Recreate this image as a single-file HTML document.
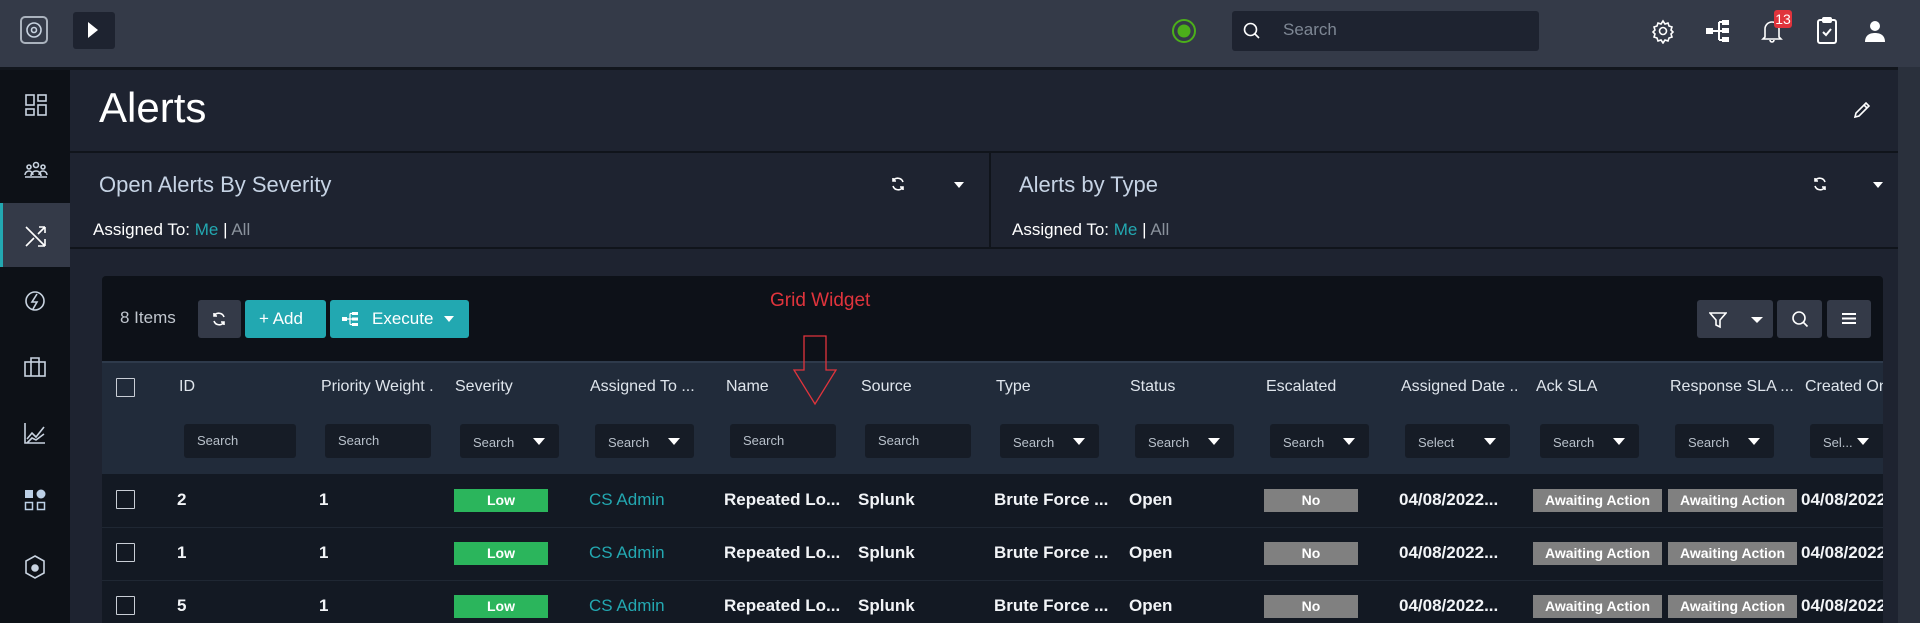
<!DOCTYPE html>
<html><head><meta charset="utf-8"><style>
*{box-sizing:border-box;margin:0;padding:0}
body{width:1920px;height:623px;overflow:hidden;background:#1e2330;font-family:"Liberation Sans",sans-serif;color:#fff;position:relative}
.a{position:absolute}
.ic{position:absolute;stroke:#c8d3e0;fill:none;stroke-width:1.6}
.hdr{font-size:16px;color:#dfe5ec;top:378px}
.inp{position:absolute;top:424px;height:34px;background:#161c26;border-radius:3px;font-size:13px;color:#b8c0ca;padding:0 0 0 13px;line-height:34px}
.inp.dd{line-height:38px}
.inp.dd:after{content:"";position:absolute;right:14px;top:14px;border:6px solid transparent;border-top:7px solid #fff;border-bottom:0}
.cell{position:absolute;font-size:17px;font-weight:bold;color:#f2f4f7}
.cb{position:absolute;left:116px;width:19px;height:19px;border:1.5px solid #c9ced6;border-radius:1px}
.low{position:absolute;left:454px;width:94px;height:23px;background:#2bb55c;font-size:14px;font-weight:bold;text-align:center;line-height:23px}
.no{position:absolute;left:1264px;width:94px;height:23px;background:#808080;font-size:14px;font-weight:bold;text-align:center;line-height:23px}
.aw{position:absolute;width:129px;height:23px;background:#808080;font-size:14px;font-weight:bold;text-align:center;line-height:23px}
.btn{position:absolute;top:300px;height:38px;border-radius:3px}
</style></head><body>
<!-- top bar -->
<div class="a" style="left:0;top:0;width:1920px;height:67px;background:#343a48"></div>
<div class="a" style="left:0;top:67px;width:1920px;height:3px;background:#12161d"></div>
<div class="a" style="left:20px;top:16px;width:28px;height:28px;border:2px solid #aab2bd;border-radius:5px"></div>
<svg class="ic" style="left:22px;top:18px" width="24" height="24" viewBox="0 0 24 24"><circle cx="12" cy="12" r="7"/><circle cx="12" cy="12" r="2.5"/></svg>
<div class="a" style="left:73px;top:12px;width:42px;height:37px;background:#1e2330;border-radius:3px"></div>
<div class="a" style="left:88px;top:22px;border-left:10px solid #fff;border-top:8px solid transparent;border-bottom:8px solid transparent"></div>
<svg class="a" style="left:1171px;top:18px" width="26" height="26" viewBox="0 0 26 26"><circle cx="13" cy="13" r="11" fill="none" stroke="#4caf1a" stroke-width="2"/><circle cx="13" cy="13" r="6.5" fill="#4caf1a"/></svg>
<div class="a" style="left:1232px;top:11px;width:307px;height:40px;background:#1e2330;border-radius:3px"></div>
<svg class="ic" style="left:1242px;top:21px;stroke:#fff" width="20" height="20" viewBox="0 0 20 20"><circle cx="8.5" cy="8.5" r="6"/><path d="M13 13l4 4"/></svg>
<div class="a" style="left:1283px;top:20px;font-size:17px;color:#7e8794">Search</div>
<svg class="ic" style="left:1650px;top:18px;stroke:#fff" width="26" height="26" viewBox="0 0 26 26"><circle cx="13" cy="13" r="3.5"/><path d="M13 3l2 3 3-1 1 3 3 1-1 3 2 2-2 2 1 3-3 1-1 3-3-1-2 3-2-3-3 1-1-3-3-1 1-3-2-2 2-2-1-3 3-1 1-3 3 1z"/></svg>
<svg class="a" style="left:1705px;top:19px" width="26" height="24" viewBox="0 0 26 24" fill="#fff"><rect x="1" y="9" width="7" height="6"/><rect x="17" y="1" width="7" height="5"/><rect x="17" y="9" width="7" height="5"/><rect x="17" y="18" width="7" height="5"/><path d="M8 12h6M14 3v18M14 3h3M14 12h3M14 21h3" stroke="#fff" stroke-width="2"/></svg>
<svg class="ic" style="left:1760px;top:18px;stroke:#fff" width="24" height="26" viewBox="0 0 24 26"><path d="M5 19V11a7 7 0 0114 0v8l2 2H3zM10 22a2 2 0 004 0"/></svg>
<div class="a" style="left:1774px;top:10px;width:18px;height:18px;background:#e0333c;border-radius:3px;font-size:14px;text-align:center;line-height:18px">13</div>
<svg class="ic" style="left:1815px;top:17px;stroke:#fff;stroke-width:2" width="24" height="28" viewBox="0 0 24 28"><rect x="3" y="3" width="18" height="23" rx="2"/><rect x="8" y="1" width="8" height="4" rx="1"/><path d="M8 15l3 3 5-6"/></svg>
<svg class="a" style="left:1863px;top:19px" width="24" height="24" viewBox="0 0 24 24" fill="#fff"><circle cx="12" cy="7" r="5"/><path d="M2 23c0-7 5-9 10-9s10 2 10 9z"/></svg>
<!-- sidebar -->
<div class="a" style="left:0;top:70px;width:70px;height:553px;background:#0d1117"></div>
<div class="a" style="left:0;top:203px;width:70px;height:64px;background:#343a48;border-left:3px solid #23a8b1"></div>
<svg class="ic" style="left:25px;top:94px" width="22" height="22" viewBox="0 0 22 22"><rect x="1" y="1" width="8" height="10"/><rect x="13" y="1" width="8" height="6"/><rect x="1" y="15" width="8" height="6"/><rect x="13" y="11" width="8" height="10"/></svg>
<svg class="ic" style="left:24px;top:161px" width="24" height="18" viewBox="0 0 24 18"><circle cx="5" cy="6" r="2"/><circle cx="12" cy="4" r="2.5"/><circle cx="19" cy="6" r="2"/><path d="M1 14a4 4 0 018 0M7 15a5 5 0 0110 0M15 14a4 4 0 018 0M1 16h22"/></svg>
<svg class="ic" style="left:24px;top:224px;stroke:#fff" width="24" height="24" viewBox="0 0 24 24"><path d="M2 3l19 19M21 22V15M21 22h-7M2 22L10 14M14 10L21 3M21 3h-6M21 3v6"/></svg>
<svg class="ic" style="left:24px;top:290px" width="22" height="22" viewBox="0 0 22 22"><circle cx="11" cy="11" r="9"/><path d="M13 4l-5 8h5l-4 7"/></svg>
<svg class="ic" style="left:24px;top:357px" width="22" height="20" viewBox="0 0 22 20"><rect x="1" y="5" width="20" height="14"/><path d="M7 5V1h8v4M7 5v14M15 5v14"/></svg>
<svg class="ic" style="left:24px;top:422px" width="22" height="22" viewBox="0 0 22 22"><path d="M1 1v20h20M3 17l5-6 4 4 8-10M3 21l5-5 4 2 8-6"/></svg>
<svg class="a" style="left:24px;top:489px" width="22" height="22" viewBox="0 0 22 22"><rect x="1" y="1" width="8" height="8" fill="#bcd0e6"/><circle cx="17" cy="5" r="4.5" fill="#bcd0e6"/><rect x="1.5" y="13.5" width="7" height="7" fill="none" stroke="#bcd0e6" stroke-width="1.5"/><rect x="13.5" y="13.5" width="7" height="7" fill="none" stroke="#bcd0e6" stroke-width="1.5"/></svg>
<svg class="ic" style="left:24px;top:555px" width="22" height="24" viewBox="0 0 22 24"><path d="M11 1l9 5v12l-9 5-9-5V6z"/><circle cx="11" cy="13" r="3" fill="#c8d3e0"/></svg>
<!-- header -->
<div class="a" style="left:70px;top:70px;width:1828px;height:81px;background:#1e2330"></div>
<div class="a" style="left:99px;top:84px;font-size:42px;color:#fff">Alerts</div>
<svg class="ic" style="left:1852px;top:100px;stroke:#fff" width="20" height="20" viewBox="0 0 20 20"><path d="M3 17l1-4L14 3l3 3L7 16zM12 5l3 3"/></svg>
<div class="a" style="left:70px;top:151px;width:1828px;height:2px;background:#10141b"></div>
<div class="a" style="left:99px;top:172px;font-size:22px;color:#c6d3e4">Open Alerts By Severity</div>
<div class="a" style="left:93px;top:220px;font-size:17px;color:#fff">Assigned To: <span style="color:#23a8b1">Me</span> | <span style="color:#8a929c">All</span></div>
<div class="a" style="left:1019px;top:172px;font-size:22px;color:#c6d3e4">Alerts by Type</div>
<div class="a" style="left:1012px;top:220px;font-size:17px;color:#fff">Assigned To: <span style="color:#23a8b1">Me</span> | <span style="color:#8a929c">All</span></div>
<svg class="ic" style="left:890px;top:176px;stroke:#fff" width="16" height="16" viewBox="0 0 16 16"><path d="M13 6a5.5 5.5 0 00-10-1M3 10a5.5 5.5 0 0010 1M3 2v3h3M13 14v-3h-3"/></svg>
<div class="a" style="left:954px;top:182px;border-top:6px solid #fff;border-left:5px solid transparent;border-right:5px solid transparent"></div>
<svg class="ic" style="left:1812px;top:176px;stroke:#fff" width="16" height="16" viewBox="0 0 16 16"><path d="M13 6a5.5 5.5 0 00-10-1M3 10a5.5 5.5 0 0010 1M3 2v3h3M13 14v-3h-3"/></svg>
<div class="a" style="left:1873px;top:182px;border-top:6px solid #fff;border-left:5px solid transparent;border-right:5px solid transparent"></div>
<div class="a" style="left:989px;top:153px;width:2px;height:94px;background:#10141b"></div>
<div class="a" style="left:70px;top:247px;width:1828px;height:2px;background:#10141b"></div>
<div class="a" style="left:1898px;top:0;width:22px;height:623px;background:#2a303c"></div>
<div class="a" style="left:1898px;top:0;width:22px;height:67px;background:#343a48"></div>
<!-- grid -->
<div class="a" style="left:102px;top:276px;width:1781px;height:347px;background:#0d1118;border-radius:4px 4px 0 0"></div>
<div class="a" style="left:120px;top:308px;font-size:17px;color:#c0c6ce">8 Items</div>
<div class="btn" style="left:198px;width:43px;background:#343a48"></div>
<svg class="ic" style="left:211px;top:311px;stroke:#fff" width="16" height="16" viewBox="0 0 16 16"><path d="M13 6a5.5 5.5 0 00-10-1M3 10a5.5 5.5 0 0010 1M3 2v3h3M13 14v-3h-3"/></svg>
<div class="btn" style="left:245px;width:81px;background:#22a8b1;font-size:17px;line-height:38px;padding-left:14px">+ Add</div>
<div class="btn" style="left:330px;width:139px;background:#22a8b1;font-size:17px;line-height:38px;padding-left:42px">Execute</div>
<svg class="a" style="left:342px;top:312px" width="16" height="14" viewBox="0 0 16 14" fill="#fff"><rect x="0" y="5" width="5" height="4"/><rect x="10" y="0" width="6" height="3"/><rect x="10" y="5.5" width="6" height="3"/><rect x="10" y="11" width="6" height="3"/><path d="M5 7h3M8 1.5v11M8 1.5h2M8 7h2M8 12.5h2" stroke="#fff" stroke-width="1.2"/></svg>
<div class="a" style="left:444px;top:316px;border-top:6px solid #fff;border-left:5px solid transparent;border-right:5px solid transparent"></div>
<div class="btn" style="left:1697px;width:76px;background:#343a48"></div>
<svg class="ic" style="left:1709px;top:311px;stroke:#fff" width="18" height="18" viewBox="0 0 18 18"><path d="M1 2h16l-6 7v7l-4-2V9z"/></svg>
<div class="a" style="left:1751px;top:317px;border-top:6px solid #fff;border-left:6px solid transparent;border-right:6px solid transparent"></div>
<div class="btn" style="left:1777px;width:45px;background:#343a48"></div>
<svg class="ic" style="left:1791px;top:310px;stroke:#fff" width="18" height="18" viewBox="0 0 18 18"><circle cx="8" cy="8" r="6"/><path d="M12.5 12.5l4 4"/></svg>
<div class="btn" style="left:1827px;width:44px;background:#343a48"></div>
<svg class="a" style="left:1842px;top:312px" width="14" height="13" viewBox="0 0 14 13" fill="#fff"><rect y="1" width="14" height="2"/><rect y="5.5" width="14" height="2"/><rect y="10" width="14" height="2"/></svg>
<div class="a" style="left:770px;top:290px;font-size:19px;color:#e0343c">Grid Widget</div>
<!-- header row -->
<div class="a" style="left:102px;top:361px;width:1781px;height:113px;background:#212b3a;border-top:2px solid #2e3a4b"></div>
<div class="a" style="left:102px;top:474px;width:1781px;height:149px;background:#131923"></div>
<div class="a" style="left:102px;top:527px;width:1781px;height:1px;background:#1f2733"></div>
<div class="a" style="left:102px;top:580px;width:1781px;height:1px;background:#1f2733"></div>
<div class="cb" style="top:378px"></div>
<div class="a hdr" style="left:179px">ID</div>
<div class="a hdr" style="left:321px">Priority Weight .</div>
<div class="a hdr" style="left:455px">Severity</div>
<div class="a hdr" style="left:590px">Assigned To ...</div>
<div class="a hdr" style="left:726px">Name</div>
<div class="a hdr" style="left:861px">Source</div>
<div class="a hdr" style="left:996px">Type</div>
<div class="a hdr" style="left:1130px">Status</div>
<div class="a hdr" style="left:1266px">Escalated</div>
<div class="a hdr" style="left:1401px">Assigned Date ..</div>
<div class="a hdr" style="left:1536px">Ack SLA</div>
<div class="a hdr" style="left:1670px">Response SLA ...</div>
<div class="a hdr" style="left:1805px;width:78px;overflow:hidden;white-space:nowrap">Created On</div>
<div class="inp" style="left:184px;width:112px">Search</div>
<div class="inp" style="left:325px;width:106px">Search</div>
<div class="inp dd" style="left:460px;width:99px">Search</div>
<div class="inp dd" style="left:595px;width:99px">Search</div>
<div class="inp" style="left:730px;width:106px">Search</div>
<div class="inp" style="left:865px;width:106px">Search</div>
<div class="inp dd" style="left:1000px;width:99px">Search</div>
<div class="inp dd" style="left:1135px;width:99px">Search</div>
<div class="inp dd" style="left:1270px;width:99px">Search</div>
<div class="inp dd" style="left:1405px;width:105px">Select</div>
<div class="inp dd" style="left:1540px;width:99px">Search</div>
<div class="inp dd" style="left:1675px;width:99px">Search</div>
<div class="inp dd" style="left:1810px;width:73px;border-radius:3px 0 0 3px">Sel...</div>
<svg class="a" style="left:790px;top:336px;overflow:visible" width="56" height="70" viewBox="0 0 56 70"><path d="M14 0h22v34h10L25 68 4 34h10z" fill="none" stroke="#e0343c" stroke-width="1.3"/></svg>
<!-- rows -->
<div class="cb" style="top:490px"></div><div class="cb" style="top:543px"></div><div class="cb" style="top:596px"></div>
<div class="cell" style="left:177px;top:490px">2</div><div class="cell" style="left:177px;top:543px">1</div><div class="cell" style="left:177px;top:596px">5</div>
<div class="cell" style="left:319px;top:490px">1</div><div class="cell" style="left:319px;top:543px">1</div><div class="cell" style="left:319px;top:596px">1</div>
<div class="low" style="top:489px">Low</div><div class="low" style="top:542px">Low</div><div class="low" style="top:595px">Low</div>
<div class="cell" style="left:589px;top:490px;color:#23a8b1;font-weight:normal">CS Admin</div><div class="cell" style="left:589px;top:543px;color:#23a8b1;font-weight:normal">CS Admin</div><div class="cell" style="left:589px;top:596px;color:#23a8b1;font-weight:normal">CS Admin</div>
<div class="cell" style="left:724px;top:490px">Repeated Lo...</div><div class="cell" style="left:724px;top:543px">Repeated Lo...</div><div class="cell" style="left:724px;top:596px">Repeated Lo...</div>
<div class="cell" style="left:858px;top:490px">Splunk</div><div class="cell" style="left:858px;top:543px">Splunk</div><div class="cell" style="left:858px;top:596px">Splunk</div>
<div class="cell" style="left:994px;top:490px">Brute Force ...</div><div class="cell" style="left:994px;top:543px">Brute Force ...</div><div class="cell" style="left:994px;top:596px">Brute Force ...</div>
<div class="cell" style="left:1129px;top:490px">Open</div><div class="cell" style="left:1129px;top:543px">Open</div><div class="cell" style="left:1129px;top:596px">Open</div>
<div class="no" style="top:489px">No</div><div class="no" style="top:542px">No</div><div class="no" style="top:595px">No</div>
<div class="cell" style="left:1399px;top:490px">04/08/2022...</div><div class="cell" style="left:1399px;top:543px">04/08/2022...</div><div class="cell" style="left:1399px;top:596px">04/08/2022...</div>
<div class="aw" style="left:1533px;top:489px">Awaiting Action</div><div class="aw" style="left:1533px;top:542px">Awaiting Action</div><div class="aw" style="left:1533px;top:595px">Awaiting Action</div>
<div class="aw" style="left:1668px;top:489px">Awaiting Action</div><div class="aw" style="left:1668px;top:542px">Awaiting Action</div><div class="aw" style="left:1668px;top:595px">Awaiting Action</div>
<div class="cell" style="left:1801px;top:490px;width:82px;overflow:hidden;white-space:nowrap">04/08/2022</div><div class="cell" style="left:1801px;top:543px;width:82px;overflow:hidden;white-space:nowrap">04/08/2022</div><div class="cell" style="left:1801px;top:596px;width:82px;overflow:hidden;white-space:nowrap">04/08/2022</div>
</body></html>
